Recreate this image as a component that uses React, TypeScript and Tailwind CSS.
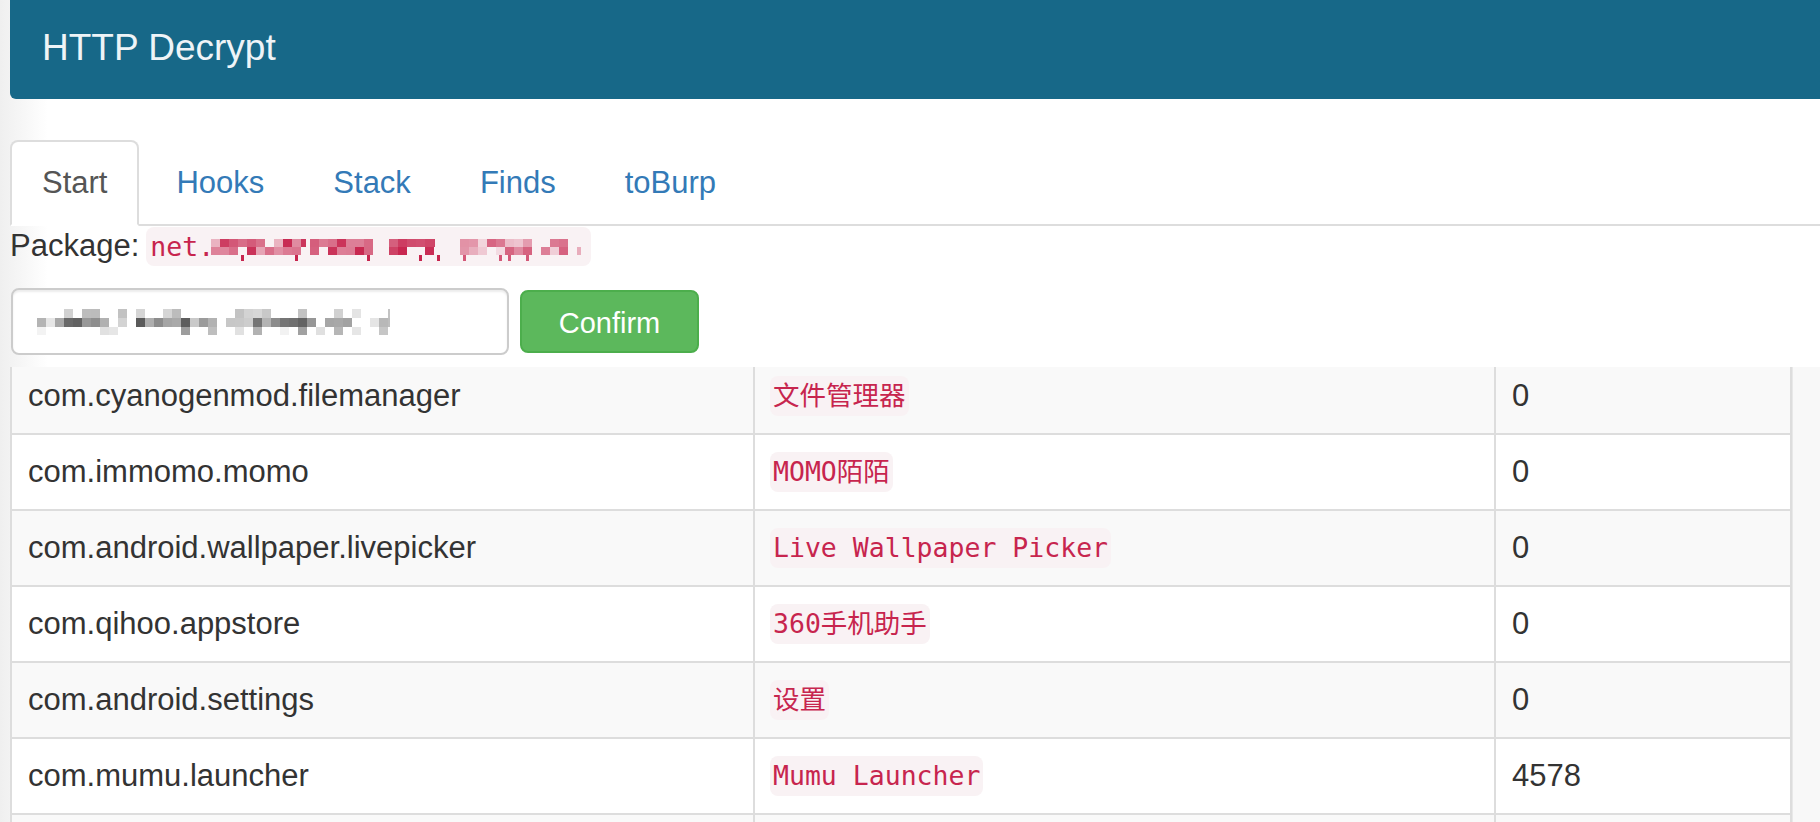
import React from "react";

const hash = (a: number, b: number) => {
  const s = Math.sin(a * 12.9898 + b * 78.233) * 43758.5453;
  return s - Math.floor(s);
};

const mix = (c1: number[], c2: number[], t: number) =>
  `rgb(${Math.round(c1[0] + (c2[0] - c1[0]) * t)},${Math.round(
    c1[1] + (c2[1] - c1[1]) * t
  )},${Math.round(c1[2] + (c2[2] - c1[2]) * t)})`;

type Block = { x: number; y: number; w: number; h: number; fill: string };

function buildPkgBlocks(): Block[] {
  const bg = [249, 242, 244];
  const fg = [199, 37, 78];
  const segs: number[][] = [
    [0, 95, 0.3, 1, 1],
    [99, 162, 0.55, 1, 2],
    [178, 224, 0.65, 1, 3],
    [249, 370, 0.1, 0.75, 4],
  ];
  const rows = [
    { y: 12, h: 8, p: 0.85 },
    { y: 20, h: 8, p: 0.75 },
  ];
  const out: Block[] = [];
  segs.forEach(([s, e, lo, hi, seed]) => {
    let i = 0;
    for (let x = s; x < e; x += 9, i++) {
      rows.forEach((r, j) => {
        if (hash(i + seed * 31, j + seed * 7) < r.p) {
          const t = lo + (hi - lo) * hash(i * 3 + seed, j * 5 + seed * 11);
          out.push({ x, y: r.y, w: Math.min(9, e - x), h: r.h, fill: mix(bg, fg, t) });
        }
      });
      if (hash(i + seed * 13, 99) < 0.22) {
        out.push({ x: x + 3, y: 28, w: 3, h: 6, fill: mix(bg, fg, hi) });
      }
    }
  });
  return out;
}

function buildInputBlocks(): Block[] {
  const bg = [255, 255, 255];
  const fg = [60, 60, 60];
  const rows = [
    { y: 0, h: 9, p: 0.55, lo: 0.05, hi: 0.35 },
    { y: 9, h: 9, p: 0.8, lo: 0.1, hi: 0.85 },
    { y: 18, h: 8, p: 0.45, lo: 0.05, hi: 0.55 },
  ];
  const out: Block[] = [];
  let i = 0;
  for (let x = 0; x < 353; x += 9, i++) {
    rows.forEach((r, j) => {
      if (hash(i * 7 + 5, j * 3 + 17) < r.p) {
        const t = r.lo + (r.hi - r.lo) * hash(i * 11 + 2, j * 13 + 9);
        out.push({ x, y: r.y, w: 9, h: r.h, fill: mix(bg, fg, t) });
      }
    });
  }
  return out;
}

const pkgBlocks = buildPkgBlocks();
const inputBlocks = buildInputBlocks();

const tabs = ["Start", "Hooks", "Stack", "Finds", "toBurp"];

const rows = [
  { pkg: "com.cyanogenmod.filemanager", name: "文件管理器", count: "0" },
  { pkg: "com.immomo.momo", name: "MOMO陌陌", count: "0" },
  { pkg: "com.android.wallpaper.livepicker", name: "Live Wallpaper Picker", count: "0" },
  { pkg: "com.qihoo.appstore", name: "360手机助手", count: "0" },
  { pkg: "com.android.settings", name: "设置", count: "0" },
  { pkg: "com.mumu.launcher", name: "Mumu Launcher", count: "4578" },
  { pkg: "", name: "", count: "" },
];

export default function App() {
  return (
    <div className="relative w-[1820px] h-[822px] overflow-hidden bg-white font-['Liberation_Sans',Arial,sans-serif] text-[#333]">
      <div className="pointer-events-none absolute left-0 top-0 h-full w-[48px] bg-linear-to-r from-[#efefef] to-white/0" />
      <div className="relative flex h-full flex-col">
        <header className="ml-[10px] flex h-[99px] shrink-0 items-center rounded-bl-[6px] bg-[#176888] pb-[5px] pl-[32px]">
          <span className="text-[37px] leading-none text-[#eef4f7]">HTTP Decrypt</span>
        </header>

        <div className="mt-[41px] shrink-0 pl-[10px]">
          <nav className="flex gap-[5px] border-b-2 border-[#ddd]">
            {tabs.map((t, i) =>
              i === 0 ? (
                <div
                  key={t}
                  className="-mb-[2px] rounded-t-[8px] border-2 border-[#ddd] border-b-transparent bg-white px-[30px] pt-[19px] pb-[19px] text-[31px] leading-[44px] text-[#555]"
                >
                  {t}
                </div>
              ) : (
                <div
                  key={t}
                  className="-mb-[2px] rounded-t-[8px] border-2 border-transparent px-[30px] pt-[19px] pb-[19px] text-[31px] leading-[44px] text-[#337ab7]"
                >
                  {t}
                </div>
              )
            )}
          </nav>

          <div className="flex h-[40px] items-center text-[31px] leading-[40px]">
            <span>Package:</span>
            <span className="ml-[7px] flex h-[39px] w-[445px] items-center rounded-[8px] bg-[#f9f2f4]">
              <span className="w-[65px] shrink-0 pl-[4px] font-['DejaVu_Sans_Mono',monospace] text-[26.5px] leading-[39px] text-[#c7254e]">
                net.
              </span>
              <svg width="380" height="39" viewBox="0 0 380 39" shapeRendering="crispEdges" className="shrink-0">
                {pkgBlocks.map((b, k) => (
                  <rect key={k} x={b.x} y={b.y} width={b.w} height={b.h} fill={b.fill} />
                ))}
              </svg>
            </span>
          </div>

          <div className="mt-[22px] flex items-center gap-[11px] pl-[1px]">
            <div className="flex h-[67px] w-[498px] items-center rounded-[8px] border-2 border-[#ccc] bg-white pl-[24px] shadow-[inset_0_2px_2px_rgba(0,0,0,0.075)]">
              <svg width="353" height="26" viewBox="0 0 353 26" shapeRendering="crispEdges">
                {inputBlocks.map((b, k) => (
                  <rect key={k} x={b.x} y={b.y} width={b.w} height={b.h} fill={b.fill} />
                ))}
              </svg>
            </div>
            <button className="flex h-[63px] w-[179px] items-center justify-center rounded-[8px] border-2 border-[#4cae4c] bg-[#5cb85c] pt-[3px] text-[29px] leading-none text-white">
              Confirm
            </button>
          </div>
        </div>

        <div className="mt-[12px] flex min-h-0 flex-1 overflow-hidden pl-[10px]">
          <div className="min-w-0 flex-1 overflow-hidden">
            <div className="-mt-[10px]">
              {rows.map((r, i) => (
                <div
                  key={i}
                  className={i % 2 === 0 ? "flex border-t-2 border-[#ddd] bg-[#f9f9f9]" : "flex border-t-2 border-[#ddd] bg-white"}
                >
                  <div className="flex h-[74px] w-[743px] shrink-0 items-center border-l-2 border-[#ddd] px-[16px] text-[31px] leading-[44px]">
                    {r.pkg}
                  </div>
                  <div className="flex h-[74px] w-[741px] shrink-0 items-center border-l-2 border-[#ddd] pl-[15px] pr-[16px]">
                    {r.name && (
                      <code className="inline-block h-[40px] rounded-[8px] bg-[#f9f2f4] px-[3px] font-['DejaVu_Sans_Mono','Noto_Sans_CJK_SC',monospace] text-[26.5px] leading-[40px] text-[#c7254e]">
                        {r.name}
                      </code>
                    )}
                  </div>
                  <div className="flex h-[74px] min-w-0 flex-1 items-center border-x-2 border-[#ddd] px-[16px] text-[31px] leading-[44px]">
                    {r.count}
                  </div>
                </div>
              ))}
            </div>
          </div>
          <div className="w-[28px] shrink-0 border-l border-[#e8e8e8] bg-[#f8f8f8]" />
        </div>
      </div>
    </div>
  );
}
